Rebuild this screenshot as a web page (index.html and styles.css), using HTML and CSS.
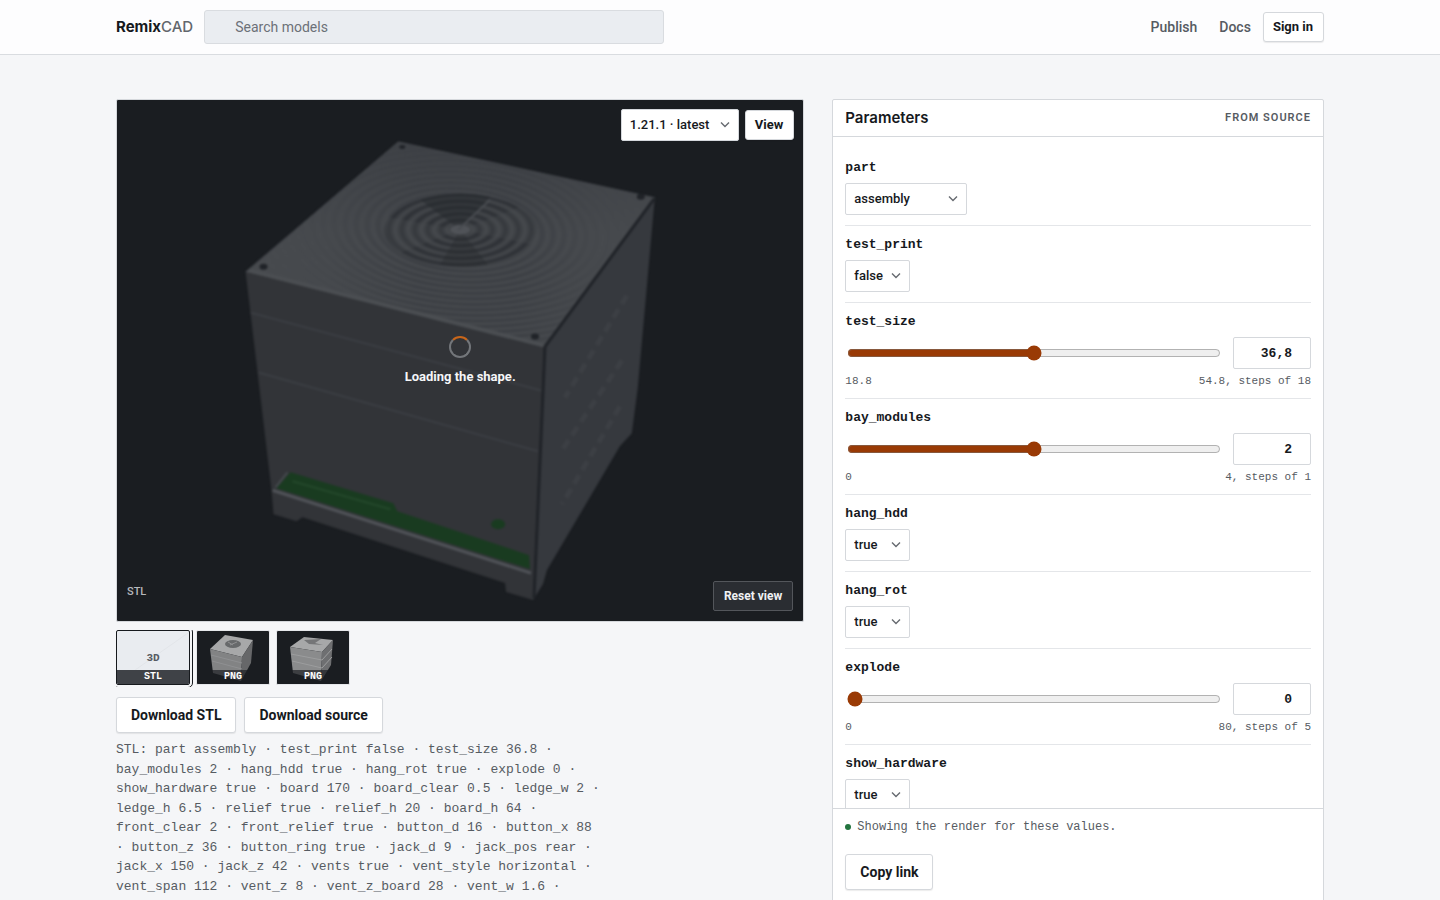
FILE: index.html
```html
<!DOCTYPE html>
<html lang="en">
<head>
<meta charset="utf-8">
<meta name="viewport" content="width=device-width, initial-scale=1">
<title>RemixCAD</title>
<link rel="stylesheet" href="styles.css">
</head>
<body>
<header class="site-header">
  <div class="container header-row">
    <a class="brand" href="#">Remix<span class="brand-suffix">CAD</span></a>
    <input class="search" type="search" placeholder="Search models" aria-label="Search models">
    <nav class="site-nav">
      <a href="#">Publish</a>
      <a href="#">Docs</a>
      <button class="button button-small" type="button">Sign in</button>
    </nav>
  </div>
</header>

<main class="container layout">
  <section class="model" aria-label="Model">
    <div class="viewer">
      <svg class="render" viewBox="116 99 688 522" preserveAspectRatio="xMidYMid slice" aria-hidden="true">
        <defs>
          <radialGradient id="grooves" gradientUnits="userSpaceOnUse" cx="0" cy="0" r="11" spreadMethod="repeat" gradientTransform="translate(460 229) rotate(4) scale(1 .5)">
            <stop offset="0" stop-color="#474a4e"/><stop offset=".5" stop-color="#3a3d42"/><stop offset="1" stop-color="#474a4e"/>
          </radialGradient>
          <radialGradient id="fan" gradientUnits="userSpaceOnUse" cx="0" cy="0" r="13" spreadMethod="repeat" gradientTransform="translate(460 229) scale(1 .49)">
            <stop offset="0" stop-color="#45484c"/><stop offset=".5" stop-color="#2c2f34"/><stop offset="1" stop-color="#45484c"/>
          </radialGradient>
          <linearGradient id="sheen" x1="0" y1="0" x2="1" y2="0">
            <stop offset="0" stop-color="#474a4e"/><stop offset=".2" stop-color="#474a4e" stop-opacity=".8"/><stop offset=".42" stop-color="#474a4e" stop-opacity="0"/><stop offset=".66" stop-color="#474a4e" stop-opacity="0"/><stop offset=".85" stop-color="#474a4e" stop-opacity=".8"/><stop offset="1" stop-color="#474a4e"/>
          </linearGradient>
          <linearGradient id="shade" x1="0" y1="0" x2="0" y2="1">
            <stop offset="0" stop-color="#3d4045" stop-opacity=".8"/><stop offset=".45" stop-color="#3d4045" stop-opacity="0"/>
          </linearGradient>
          <clipPath id="lid"><path d="M398 141 655 197 544 347 245 271Z"/></clipPath>
          <filter id="soft" x="-5%" y="-5%" width="110%" height="110%" color-interpolation-filters="sRGB"><feGaussianBlur stdDeviation=".9"/></filter>
        </defs>
        <g filter="url(#soft)">
          <path fill="#323438" d="M245 271 544 347 533 600 506 592 505 583 302 517 296 521 273 514 271 490Z"/>
          <path fill="#36393e" d="M544 347 655 197 638 387 632 433 620 446 547 570 543 584 533 600Z"/>
          <path fill="url(#grooves)" d="M398 141 655 197 544 347 245 271Z"/>
          <path fill="url(#sheen)" d="M398 141 655 197 544 347 245 271Z"/>
          <path fill="url(#shade)" d="M398 141 655 197 544 347 245 271Z"/>
          <ellipse cx="460" cy="230" rx="77" ry="37" fill="url(#fan)"/>
          <path fill="#24272c" opacity=".5" d="M460 229 420 199Q455 188 490 196Z"/>
          <path fill="#24272c" opacity=".35" d="M460 229 440 264Q465 268 488 264Z"/>
          <path fill="#4b4e53" opacity=".3" d="M460 229 386 216Q381 236 400 252ZM460 229 520 206Q546 226 532 244Z"/>
          <ellipse cx="460" cy="229" rx="10" ry="5" fill="#505358"/>
          <path d="M458 229 490 199" stroke="#484b50" stroke-width="2"/>
          <g clip-path="url(#lid)" fill="none" stroke="#4b4e52"><path d="M245 271 544 347" stroke-width="8"/></g>
          <path fill="none" stroke="#202328" stroke-width="3" d="M655 197 545 346 534 598"/>
          <path fill="none" stroke="#42454a" d="M246 271 398 141 655 197"/>
          <g fill="#202328"><ellipse cx="263" cy="266" rx="4" ry="3"/><ellipse cx="402" cy="146" rx="3" ry="2"/><ellipse cx="641" cy="196" rx="4" ry="3"/><ellipse cx="535" cy="336" rx="4" ry="3"/></g>
          <g fill="none" stroke="#3b3e43" stroke-width="2"><path d="M250 312 541 390M258 372 538 451"/></g>
          <path fill="#193b20" d="M290 472 393 503 397 511 529 555 530 569 276 488Z"/>
          <path fill="none" stroke="#24482b" stroke-width="2" d="M292 481 390 509"/>
          <path fill="none" stroke="#505358" stroke-width="3" d="M272 490 531 573"/>
          <path fill="none" stroke="#454a4e" stroke-width="2" d="M275 487 287 472"/>
          <ellipse cx="498" cy="524" rx="7" ry="5" fill="#193b20"/>
          <g fill="none" stroke="#44474c" stroke-width="5" stroke-dasharray="10 6" opacity=".45"><path d="M627 295 565 397M622 360 562 450M620 406 562 504"/></g>
        </g>
      </svg>
      <div class="viewer-tools">
        <select class="select select-version" aria-label="Version"><option>1.21.1 · latest</option></select>
        <button class="button button-small" type="button">View</button>
      </div>
      <div class="loading" role="status"><span class="spinner"></span><span>Loading the shape.</span></div>
      <div class="viewer-footer"><span class="format">STL</span><button class="button-reset" type="button">Reset view</button></div>
    </div>

    <div class="thumbs">
      <button class="thumb thumb-stl" type="button" aria-pressed="true"><span class="thumb-art">3D</span><span class="thumb-label">STL</span></button>
      <button class="thumb" type="button" aria-pressed="false">
        <svg viewBox="0 0 72 53" aria-hidden="true"><path fill="#a7a8a9" d="M28 4 56 9 45 26 13 18Z"/><path fill="#828384" d="M13 18 45 26 44 50 16 42Z"/><path fill="#666769" d="M56 9 45 26 44 50 54 32Z"/><ellipse cx="36" cy="13" rx="8" ry="4" fill="#67696b"/><path fill="none" stroke="#8f9092" d="M33 14 40 11M31 11 36 14M14 24 45 32M15 30 45 38"/></svg>
        <span class="thumb-label">PNG</span>
      </button>
      <button class="thumb" type="button" aria-pressed="false">
        <svg viewBox="0 0 72 53" aria-hidden="true"><path fill="#a7a8a9" d="M27 6 56 9 45 21 13 16Z"/><path fill="#8a8b8c" d="M13 16 45 21 44 50 16 42Z"/><path fill="#6e6f71" d="M56 9 45 21 44 50 54 34Z"/><path fill="#747577" d="M27 9 44 8 38 12 46 14 32 13Z"/><path fill="none" stroke="#9c9d9e" d="M14 23 45 29 55 18M15 30 45 37 55 26"/></svg>
        <span class="thumb-label">PNG</span>
      </button>
    </div>

    <div class="downloads">
      <button class="button" type="button">Download STL</button>
      <button class="button" type="button">Download source</button>
    </div>
    <p class="values">STL: part assembly · test_print false · test_size 36.8 · bay_modules 2 · hang_hdd true · hang_rot true · explode 0 · show_hardware true · board 170 · board_clear 0.5 · ledge_w 2 · ledge_h 6.5 · relief true · relief_h 20 · board_h 64 · front_clear 2 · front_relief true · button_d 16 · button_x 88 · button_z 36 · button_ring true · jack_d 9 · jack_pos rear · jack_x 150 · jack_z 42 · vents true · vent_style horizontal · vent_span 112 · vent_z 8 · vent_z_board 28 · vent_w 1.6 · vent_gap 3 · vent_side both · hdd_w 102</p>
  </section>

  <form class="panel">
    <div class="panel-head"><h2>Parameters</h2><span class="panel-source">From source</span></div>
    <div class="panel-body">
      <div class="param"><label for="part">part</label><select class="select select-wide" id="part"><option>assembly</option></select></div>
      <div class="param"><label for="test_print">test_print</label><select class="select" id="test_print"><option>false</option><option>true</option></select></div>
      <div class="param"><label for="test_size">test_size</label>
        <div class="range-row"><input type="range" id="test_size" min="18.8" max="54.8" step="18" value="36.8"><input class="number" type="text" inputmode="decimal" value="36,8" aria-label="test_size value"></div>
        <div class="limits"><span>18.8</span><span>54.8, steps of 18</span></div></div>
      <div class="param"><label for="bay_modules">bay_modules</label>
        <div class="range-row"><input type="range" id="bay_modules" min="0" max="4" step="1" value="2"><input class="number" type="text" inputmode="decimal" value="2" aria-label="bay_modules value"></div>
        <div class="limits"><span>0</span><span>4, steps of 1</span></div></div>
      <div class="param"><label for="hang_hdd">hang_hdd</label><select class="select" id="hang_hdd"><option>true</option><option>false</option></select></div>
      <div class="param"><label for="hang_rot">hang_rot</label><select class="select" id="hang_rot"><option>true</option><option>false</option></select></div>
      <div class="param"><label for="explode">explode</label>
        <div class="range-row"><input type="range" id="explode" min="0" max="80" step="5" value="0"><input class="number" type="text" inputmode="decimal" value="0" aria-label="explode value"></div>
        <div class="limits"><span>0</span><span>80, steps of 5</span></div></div>
      <div class="param"><label for="show_hardware">show_hardware</label><select class="select" id="show_hardware"><option>true</option><option>false</option></select></div>
    </div>
    <div class="panel-foot">
      <p class="status">Showing the render for these values.</p>
      <button class="button" type="button">Copy link</button>
    </div>
  </form>
</main>
</body>
</html>
```
FILE: styles.css
```css
:root {
  --sans: "Roboto", "Liberation Sans", sans-serif;
  --display: "Inter", "Liberation Sans", sans-serif;
  --mono: "Liberation Mono", "DejaVu Sans Mono", monospace;
  --ink: #16191d;
  --muted: #565b62;
  --line: #d5d8dc;
  --dark: #1a1d21;
}
* { box-sizing: border-box; }
body { margin: 0; background: #f5f6f8; color: var(--ink); font: 14px/20px var(--sans); }
a { color: inherit; text-decoration: none; }
button, input, select { font: inherit; color: inherit; }
.container { max-width: 1240px; margin: 0 auto; padding: 0 16px; }

.site-header { background: #fdfdfe; border-bottom: 1px solid #d9dce0; }
.header-row { display: flex; align-items: center; gap: 11px; height: 54px; }
.brand { font: 700 15px/20px var(--display); }
.brand-suffix { color: #62666c; font-weight: 500; }
.search { appearance: none; flex: 0 1 460px; min-width: 0; height: 34px; padding: 0 12px 0 30px; background: #eaedf1; border: 1px solid #d9dce0; border-radius: 3px; }
.search::placeholder { color: #6c7178; opacity: 1; }
.site-nav { display: flex; align-items: center; margin-left: auto; color: #565b62; font-weight: 500; }
.site-nav a + a { margin-left: 22px; }
.site-nav .button { margin-left: 12px; }

.button { height: 36px; padding: 0 14px; background: #fff; border: 1px solid var(--line); border-radius: 3px; box-shadow: 0 1px 1px #16191d14; color: var(--ink); font-weight: 700; white-space: nowrap; }
.button-small { height: 30px; padding: 0 10px 0 9px; font-size: 13px; }

.select { appearance: none; width: 65px; height: 32px; padding: 0 24px 0 8px; border: 1px solid var(--line); border-radius: 2px; font-size: 13px; font-weight: 500; background: #fff url("data:image/svg+xml,%3Csvg xmlns='http://www.w3.org/2000/svg' width='10' height='8' fill='none' stroke='%23666a70' stroke-width='1.4'%3E%3Cpath d='M1 1.5 5 5.5 9 1.5'/%3E%3C/svg%3E") no-repeat right 8px center; }
.select-wide { width: 122px; }
.select-version { width: 118px; }

.layout { display: grid; grid-template-columns: minmax(0, 7fr) minmax(0, 5fr); gap: 28px; padding-top: 44px; align-items: start; }
.viewer { position: relative; height: calc(58vh + 1px); min-height: 320px; overflow: hidden; background: var(--dark); border: 1px solid var(--line); border-radius: 2px; }
.render { display: block; width: 100%; height: 100%; }
.viewer-tools { position: absolute; top: 9px; right: 9px; display: flex; align-items: center; gap: 6px; }
.loading { position: absolute; inset: 0; display: flex; flex-direction: column; align-items: center; justify-content: center; gap: 10px; color: #f5f6f8; font-size: 13px; line-height: 18px; font-weight: 700; pointer-events: none; }
.spinner { width: 22px; height: 22px; border: 2px solid #73767a; border-top-color: #c9661a; border-radius: 50%; }
.viewer-footer { position: absolute; left: 10px; right: 10px; bottom: 10px; display: flex; align-items: center; justify-content: space-between; }
.format { padding-bottom: 8px; color: #b5b8bc; font-size: 11px; font-weight: 500; line-height: 16px; }
.button-reset { height: 30px; padding: 0 10px; background: #2a2d32; border: 1px solid #53565b; border-radius: 2px; color: #f0f1f3; font-size: 12px; font-weight: 700; }

.thumbs { display: flex; gap: 6px; margin-top: 8px; padding-bottom: 2px; overflow: hidden; }
.thumb { position: relative; display: flex; flex-direction: column; justify-content: flex-end; width: 74px; height: 55px; padding: 0; overflow: hidden; background: var(--dark); border: 1px solid #e6e8eb; border-radius: 2px; }
.thumb svg { width: 100%; height: 100%; }
.thumb[aria-pressed="true"] { border-color: var(--ink); outline: 1px solid var(--ink); outline-offset: 2px; }
.thumb-stl { background: linear-gradient(145deg, #e9ecf0 49%, #e2e5e9 50%, #e9ecf0 51%); }
.thumb-art { padding-bottom: 4px; text-align: center; color: var(--muted); font: 700 11px/16px var(--mono); }
.thumb-label { background: #3f4247; color: #fff; font: 700 10px/14px var(--mono); text-align: center; }
.thumb svg + .thumb-label { position: absolute; left: 0; right: 0; bottom: 0; background: #1a1d21b0; }

.downloads { display: flex; flex-wrap: wrap; gap: 8px; margin-top: 10px; }
.values { max-width: 62ch; margin: 7px 0 40px; color: var(--muted); font: 13px/1.5 var(--mono); }

.panel { display: flex; flex-direction: column; height: calc(100vh - 80px); min-height: 400px; background: #fff; border: 1px solid var(--line); border-radius: 2px; }
.panel-head { display: flex; align-items: center; justify-content: space-between; height: 37px; flex: none; padding: 0 12px; border-bottom: 1px solid var(--line); }
.panel-head h2 { margin: 0; font: 600 15px/20px var(--display); }
.panel-source { color: var(--muted); font-size: 11px; font-weight: 600; line-height: 16px; letter-spacing: 1px; text-transform: uppercase; }
.panel-body { flex: 1; min-height: 0; padding: 12px 12px 0; overflow: hidden; }
.param { padding: 10px 0; border-bottom: 1px solid #e4e6e9; }
.param label { display: block; margin-bottom: 6px; font: 700 13px/18px var(--mono); }
.param .select { display: block; }
.range-row { display: flex; align-items: center; gap: 10px; }
.range-row input[type="range"] { flex: 1; min-width: 0; height: 16px; margin: 2px; accent-color: #993a05; }
.number { width: 78px; height: 32px; padding: 0 18px 0 8px; background: #fff; border: 1px solid var(--line); border-radius: 2px; font: 700 13px/16px var(--mono); text-align: right; }
.limits { display: flex; justify-content: space-between; margin-top: 5px; color: #565b62; font: 11px/14px var(--mono); }
.panel-foot { flex: none; padding: 10px 12px 28px; border-top: 1px solid var(--line); }
.status { display: flex; align-items: center; gap: 6px; margin: 0 0 19px; color: var(--muted); font: 12px/16px var(--mono); }
.status::before { content: ""; width: 6px; height: 6px; border-radius: 50%; background: #23743f; }
```
